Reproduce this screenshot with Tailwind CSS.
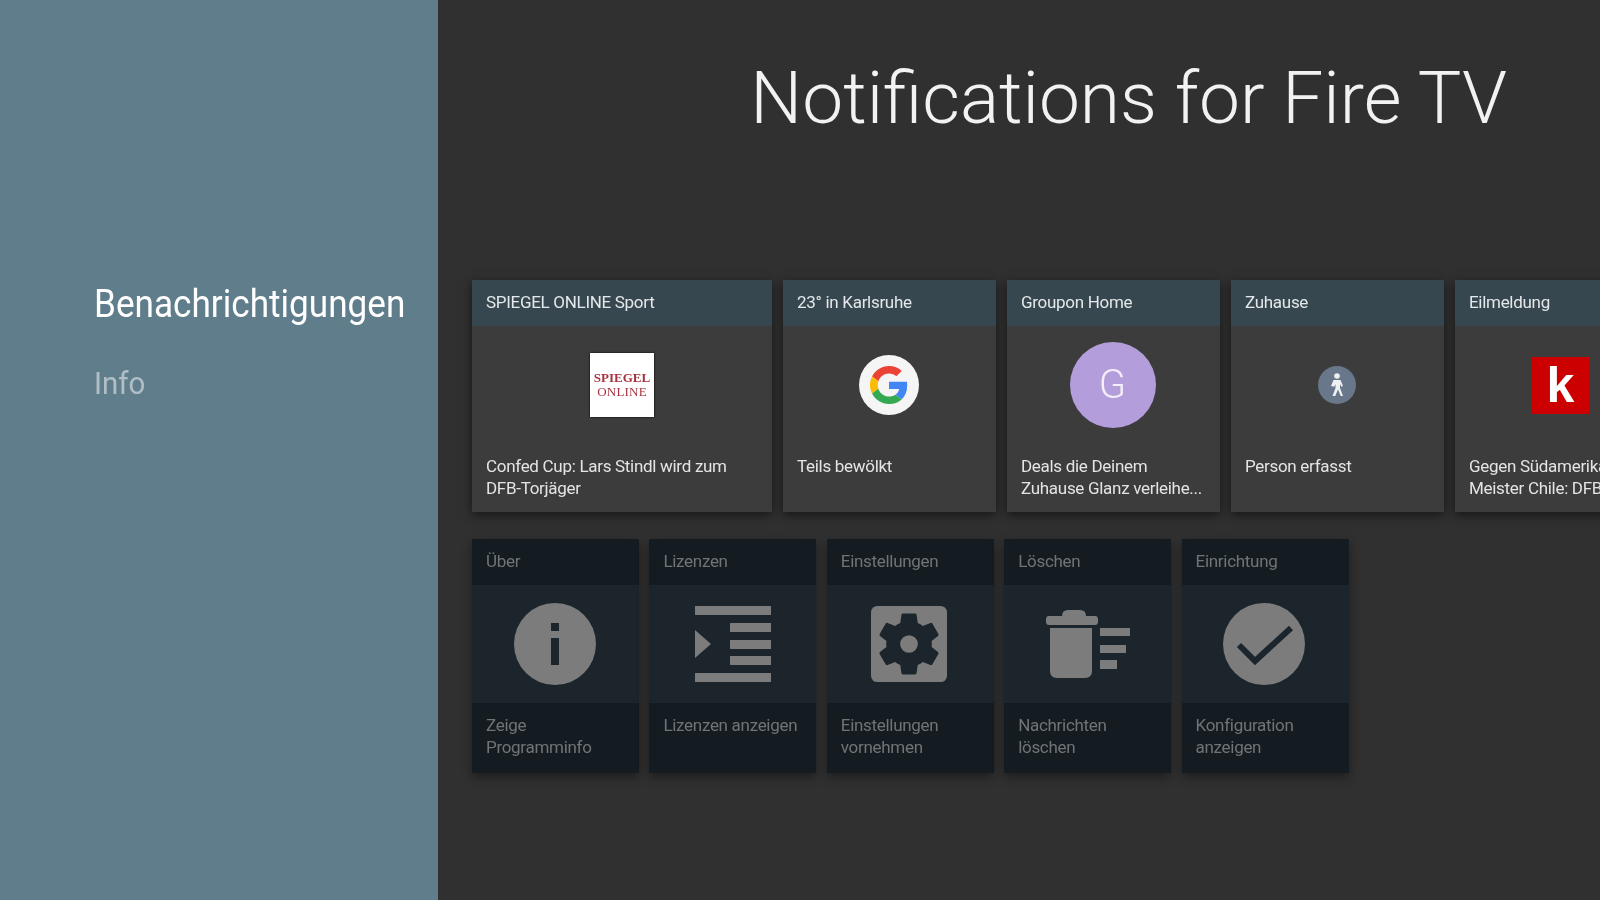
<!DOCTYPE html>
<html lang="de">
  <head>
    <meta charset="UTF-8" />
    <meta name="viewport" content="width=device-width, initial-scale=1.0" />
    <title>Notifications for Fire TV</title>
    <script src="https://cdn.jsdelivr.net/npm/@tailwindcss/browser@4"></script>
  </head>
  <body class="bg-[#303030] text-white overflow-hidden font-['Roboto',sans-serif]">
    <div class="flex w-[1600px] h-[900px] overflow-hidden blur-[0.7px]">
      <!-- Seitenleiste -->
      <aside class="w-[438px] shrink-0 bg-[#607d8b] pl-[94px] pt-[279px]">
        <div class="text-[38px] leading-[50px] text-white origin-left scale-x-[0.925] whitespace-nowrap">Benachrichtigungen</div>
        <div class="mt-[34px] text-[32px] leading-[40px] text-white/50 origin-left scale-x-[0.92]">Info</div>
      </aside>

      <main class="flex-1 min-w-0">
        <h1 class="h-[280px] pt-[53px] pr-[93px] text-right text-[73px] leading-[90px] font-light text-[#f2f2f2] whitespace-nowrap">Notifications for Fire TV</h1>

        <!-- Benachrichtigungen -->
        <div class="flex gap-[11px] pl-[34px]">
          <div class="w-[300px] h-[232px] shrink-0 bg-[#3c3c3c] shadow-[0_3px_10px_rgba(0,0,0,0.55)]">
            <div class="h-[46px] bg-[#37474f] px-[14px] text-[17px] leading-[45px] text-[#e4e8ea] tracking-[-0.3px] whitespace-nowrap">SPIEGEL ONLINE Sport</div>
            <div class="h-[130px] pb-[12px] flex items-center justify-center">
              <div class="w-[64px] h-[64px] bg-white shadow-[0_0_2px_#000] flex flex-col items-center justify-center font-['Liberation_Serif',serif] font-bold text-[#a8323f] text-[13px] leading-[14px]">
                <span>SPIEGEL</span><span class="font-normal tracking-[0.2px]">ONLINE</span>
              </div>
            </div>
            <div class="px-[14px] text-[17px] leading-[21.5px] text-[#e4e4e4] tracking-[-0.3px]">Confed Cup: Lars Stindl wird zum<br />DFB-Torjäger</div>
          </div>

          <div class="w-[213px] h-[232px] shrink-0 bg-[#3c3c3c] shadow-[0_3px_10px_rgba(0,0,0,0.55)]">
            <div class="h-[46px] bg-[#37474f] px-[14px] text-[17px] leading-[45px] text-[#e4e8ea] tracking-[-0.3px] whitespace-nowrap">23° in Karlsruhe</div>
            <div class="h-[130px] pb-[12px] pr-[2px] flex items-center justify-center">
              <div class="w-[60px] h-[60px] rounded-full bg-[#f5f5f5] flex items-center justify-center">
                <svg width="38" height="38" viewBox="0 0 48 48">
                  <path fill="#EA4335" d="M24 9.5c3.5 0 6.7 1.2 9.2 3.6l6.9-6.9C35.9 2.4 30.5 0 24 0 14.6 0 6.5 5.4 2.6 13.2l8 6.2C12.4 13.7 17.7 9.5 24 9.5z" />
                  <path fill="#4285F4" d="M47 24.5c0-1.6-.1-3.1-.4-4.5H24v9h12.900c-.6 3-2.200 5.500-4.700 7.200l7.700 6c4.500-4.200 7.100-10.300 7.100-17.700z" />
                  <path fill="#FBBC05" d="M10.600 28.600c-.5-1.500-.8-3-.8-4.600s.3-3.100.8-4.600l-8-6.200C.9 16.500 0 20.100 0 24s.9 7.500 2.600 10.800l8-6.200z" />
                  <path fill="#34A853" d="M24 48c6.500 0 11.900-2.100 15.900-5.800l-7.700-6c-2.200 1.400-4.900 2.300-8.200 2.300-6.300 0-11.600-4.200-13.400-9.900l-8 6.200C6.500 42.600 14.600 48 24 48z" />
                </svg>
              </div>
            </div>
            <div class="px-[14px] text-[17px] leading-[21.5px] text-[#e4e4e4] tracking-[-0.3px]">Teils bewölkt</div>
          </div>

          <div class="w-[213px] h-[232px] shrink-0 bg-[#3c3c3c] shadow-[0_3px_10px_rgba(0,0,0,0.55)]">
            <div class="h-[46px] bg-[#37474f] px-[14px] text-[17px] leading-[45px] text-[#e4e8ea] tracking-[-0.3px] whitespace-nowrap">Groupon Home</div>
            <div class="h-[130px] pb-[12px] pr-[2px] flex items-center justify-center">
              <div class="w-[86px] h-[86px] rounded-full bg-[#b39ddb] flex items-center justify-center text-[40px] font-light text-[#f3eef9]">G</div>
            </div>
            <div class="px-[14px] text-[17px] leading-[21.5px] text-[#e4e4e4] tracking-[-0.3px] whitespace-nowrap">Deals die Deinem<br />Zuhause Glanz verleihe...</div>
          </div>

          <div class="w-[213px] h-[232px] shrink-0 bg-[#3c3c3c] shadow-[0_3px_10px_rgba(0,0,0,0.55)]">
            <div class="h-[46px] bg-[#37474f] px-[14px] text-[17px] leading-[45px] text-[#e4e8ea] tracking-[-0.3px] whitespace-nowrap">Zuhause</div>
            <div class="h-[130px] pb-[12px] pr-[2px] flex items-center justify-center">
              <div class="w-[38px] h-[38px] rounded-full bg-[#68788a] flex items-center justify-center">
                <svg width="24" height="28" viewBox="0 0 24 28" fill="#eef0f2">
                  <circle cx="12" cy="5" r="2.8" />
                  <path d="M8.5 9h7l2.500 6-1.700.7-1.300-2.700v4l3 8h-2.300l-2.700-6.500-2.700 6.500H7.500l3-8v-4l-1.300 2.700L6 15z" />
                </svg>
              </div>
            </div>
            <div class="px-[14px] text-[17px] leading-[21.5px] text-[#e4e4e4] tracking-[-0.3px]">Person erfasst</div>
          </div>

          <div class="w-[213px] h-[232px] shrink-0 bg-[#3c3c3c] shadow-[0_3px_10px_rgba(0,0,0,0.55)]">
            <div class="h-[46px] bg-[#37474f] px-[14px] text-[17px] leading-[45px] text-[#e4e8ea] tracking-[-0.3px] whitespace-nowrap">Eilmeldung</div>
            <div class="h-[130px] pb-[12px] pr-[2px] flex items-center justify-center">
              <div class="w-[57px] h-[57px] bg-[#cc0000] flex items-center justify-center font-['Liberation_Sans',sans-serif] font-bold text-[50px] leading-none text-white">k</div>
            </div>
            <div class="px-[14px] text-[17px] leading-[21.5px] text-[#e4e4e4] tracking-[-0.3px] whitespace-nowrap">Gegen Südamerikameister<br />Meister Chile: DFB-Team</div>
          </div>
        </div>

        <!-- Aktionen -->
        <div class="flex gap-[10.4px] pl-[34px] mt-[27px]">
          <div class="w-[167px] h-[234px] shrink-0 bg-[#141c22] shadow-[0_4px_10px_rgba(0,0,0,0.4)]">
            <div class="h-[46px] px-[14px] text-[17px] leading-[45px] text-[#6f7477] tracking-[-0.3px]">Über</div>
            <div class="h-[118px] bg-[#1b252b] flex items-center justify-center pr-[2px]">
              <svg width="82" height="82" viewBox="0 0 82 82">
                <circle cx="41" cy="41" r="41" fill="#7c7c7c" />
                <rect x="37" y="20" width="8" height="8" fill="#1b252b" />
                <rect x="37" y="35" width="8" height="27" fill="#1b252b" />
              </svg>
            </div>
            <div class="px-[14px] pt-[12px] text-[17px] leading-[21.5px] text-[#6f7477] tracking-[-0.3px]">Zeige<br />Programminfo</div>
          </div>

          <div class="w-[167px] h-[234px] shrink-0 bg-[#141c22] shadow-[0_4px_10px_rgba(0,0,0,0.4)]">
            <div class="h-[46px] px-[14px] text-[17px] leading-[45px] text-[#6f7477] tracking-[-0.3px]">Lizenzen</div>
            <div class="h-[118px] bg-[#1b252b] flex items-center justify-center">
              <svg width="76" height="76" viewBox="0 0 76 76" fill="#7c7c7c">
                <rect x="0" y="0" width="76" height="9" />
                <rect x="35" y="17" width="41" height="9" />
                <rect x="35" y="34" width="41" height="9" />
                <rect x="35" y="50" width="41" height="9" />
                <rect x="0" y="67" width="76" height="9" />
                <path d="M0 24l16 14L0 52z" />
              </svg>
            </div>
            <div class="px-[14px] pt-[12px] text-[17px] leading-[21.5px] text-[#6f7477] tracking-[-0.3px] whitespace-nowrap">Lizenzen anzeigen</div>
          </div>

          <div class="w-[167px] h-[234px] shrink-0 bg-[#141c22] shadow-[0_4px_10px_rgba(0,0,0,0.4)]">
            <div class="h-[46px] px-[14px] text-[17px] leading-[45px] text-[#6f7477] tracking-[-0.3px]">Einstellungen</div>
            <div class="h-[118px] bg-[#1b252b] flex items-center justify-center pr-[2px]">
              <svg width="76" height="76" viewBox="0 0 24 24">
                <rect width="24" height="24" rx="2" fill="#7c7c7c" />
                <path fill="#1b252b" d="M19.14 12.94c.04-.3.06-.61.06-.94s-.02-.64-.07-.94l2.030-1.580a.5.5 0 0 0 .12-.61l-1.920-3.320a.5.5 0 0 0-.59-.22l-2.390.96a7 7 0 0 0-1.620-.94l-.36-2.540a.48.48 0 0 0-.48-.41h-3.840a.47.47 0 0 0-.47.41l-.36 2.540c-.59.24-1.130.57-1.620.94l-2.390-.96a.5.5 0 0 0-.59.22L2.740 8.870a.5.5 0 0 0 .12.61l2.030 1.580c-.05.3-.09.63-.09.94s.02.64.07.94l-2.030 1.580a.5.5 0 0 0-.12.61l1.920 3.320c.12.22.37.29.59.22l2.390-.96c.5.38 1.030.7 1.620.94l.36 2.540c.05.24.24.41.48.41h3.840c.24 0 .44-.17.47-.41l.36-2.540c.59-.24 1.130-.56 1.620-.94l2.390.96c.22.08.47 0 .59-.22l1.920-3.320a.5.5 0 0 0-.12-.61zM12 14.800a2.800 2.800 0 1 1 0-5.600 2.800 2.800 0 0 1 0 5.600z" />
              </svg>
            </div>
            <div class="px-[14px] pt-[12px] text-[17px] leading-[21.5px] text-[#6f7477] tracking-[-0.3px]">Einstellungen<br />vornehmen</div>
          </div>

          <div class="w-[167px] h-[234px] shrink-0 bg-[#141c22] shadow-[0_4px_10px_rgba(0,0,0,0.4)]">
            <div class="h-[46px] px-[14px] text-[17px] leading-[45px] text-[#6f7477] tracking-[-0.3px]">Löschen</div>
            <div class="h-[118px] bg-[#1b252b] flex items-center justify-center">
              <svg width="84" height="68" viewBox="0 0 84 68" fill="#7c7c7c">
                <path d="M16 6q0-6 6-6h12q6 0 6 6h9q3 0 3 3v3q0 3-3 3H3q-3 0-3-3V9q0-3 3-3z" />
                <path d="M4 18h42v43q0 7-7 7H11q-7 0-7-7z" />
                <rect x="54" y="18" width="30" height="8" />
                <rect x="54" y="35" width="26" height="8" />
                <rect x="54" y="50" width="17" height="9" />
              </svg>
            </div>
            <div class="px-[14px] pt-[12px] text-[17px] leading-[21.5px] text-[#6f7477] tracking-[-0.3px]">Nachrichten<br />löschen</div>
          </div>

          <div class="w-[167px] h-[234px] shrink-0 bg-[#141c22] shadow-[0_4px_10px_rgba(0,0,0,0.4)]">
            <div class="h-[46px] px-[14px] text-[17px] leading-[45px] text-[#6f7477] tracking-[-0.3px]">Einrichtung</div>
            <div class="h-[118px] bg-[#1b252b] flex items-center justify-center pr-[2px]">
              <svg width="82" height="82" viewBox="0 0 82 82">
                <circle cx="41" cy="41" r="41" fill="#7c7c7c" />
                <path d="M16 42l16 16 36-33" fill="none" stroke="#1b252b" stroke-width="6" />
              </svg>
            </div>
            <div class="px-[14px] pt-[12px] text-[17px] leading-[21.5px] text-[#6f7477] tracking-[-0.3px]">Konfiguration<br />anzeigen</div>
          </div>
        </div>
      </main>
    </div>
  </body>
</html>
